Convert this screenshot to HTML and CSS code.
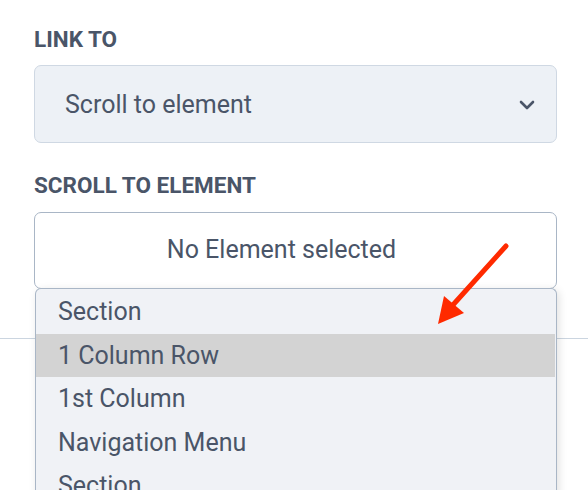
FILE: index.html
```html
<!DOCTYPE html>
<html>
<head>
<meta charset="utf-8">
<link rel="stylesheet" href="styles.css">
</head>
<body>
<div class="panel">
  <div class="field">
    <div class="label">LINK TO</div>
    <div class="select">
      <span>Scroll to element</span>
      <svg class="chev" width="16" height="10" viewBox="0 0 16 10"><path d="M2 2 L8 8 L14 2" fill="none" stroke="#4a5568" stroke-width="2.6" stroke-linecap="round" stroke-linejoin="round"/></svg>
    </div>
  </div>
  <div class="field second">
    <div class="label">SCROLL TO ELEMENT</div>
    <div class="picker">No Element selected</div>
    <div class="dropdown">
      <div class="item">Section</div>
      <div class="item active">1 Column Row</div>
      <div class="item">1st Column</div>
      <div class="item">Navigation Menu</div>
      <div class="item">Section</div>
    </div>
  </div>
  <div class="divider"></div>
</div>
<svg class="arrow" width="588" height="490" viewBox="0 0 588 490">
  <line x1="506" y1="246" x2="452" y2="306" stroke="#ff2a00" stroke-width="5" stroke-linecap="round"/>
  <polygon points="438,324 444,296 464,313" fill="#ff2a00"/>
</svg>
</body>
</html>
```
FILE: styles.css
```css
html, body {
  margin: 0;
  padding: 0;
  background: #ffffff;
  width: 588px;
  height: 490px;
  overflow: hidden;
  font-family: Roboto, "Liberation Sans", sans-serif;
}
.panel {
  position: relative;
  padding: 26px 31px 0 34px;
}
.label {
  font-size: 22.5px;
  font-weight: 700;
  color: #4a5568;
  line-height: 26px;
}
.select {
  margin-top: 13px;
  height: 78px;
  box-sizing: border-box;
  border: 1px solid #cfd8e3;
  border-radius: 7px;
  background: #edf1f6;
  display: flex;
  align-items: center;
  justify-content: space-between;
  padding: 0 21px 0 30px;
  font-size: 25px;
  color: #4a5568;
}
.chev { margin-top: 2px; }
.second { margin-top: 29px; position: relative; z-index: 2; }
.picker {
  margin-top: 14px;
  height: 77px;
  box-sizing: border-box;
  border: 1px solid #a9b6c6;
  border-radius: 7px;
  background: #ffffff;
  display: flex;
  align-items: center;
  justify-content: center;
  font-size: 25px;
  color: #4a5568;
  padding: 0 28px 2px 0;
}
.dropdown {
  margin: -1px 0 0 1px;
  height: 220px;
  box-sizing: border-box;
  background: #f0f2f6;
  border: 1px solid #a9b6c6;
  border-bottom: none;
  border-radius: 6px 6px 0 0;
  box-shadow: 2px 2px 8px rgba(0,0,0,0.12);
  padding: 1px 1px 0 0;
}
.item {
  height: 43.5px;
  display: flex;
  align-items: center;
  padding-left: 22px;
  font-size: 25px;
  color: #4a5568;
}
.active { background: #d3d3d3; }
.divider {
  position: absolute;
  left: 0;
  right: 0;
  top: 338px;
  height: 1px;
  background: #cbd5e0;
  z-index: 1;
}
.arrow {
  position: absolute;
  left: 0;
  top: 0;
  z-index: 5;
  pointer-events: none;
}
```
